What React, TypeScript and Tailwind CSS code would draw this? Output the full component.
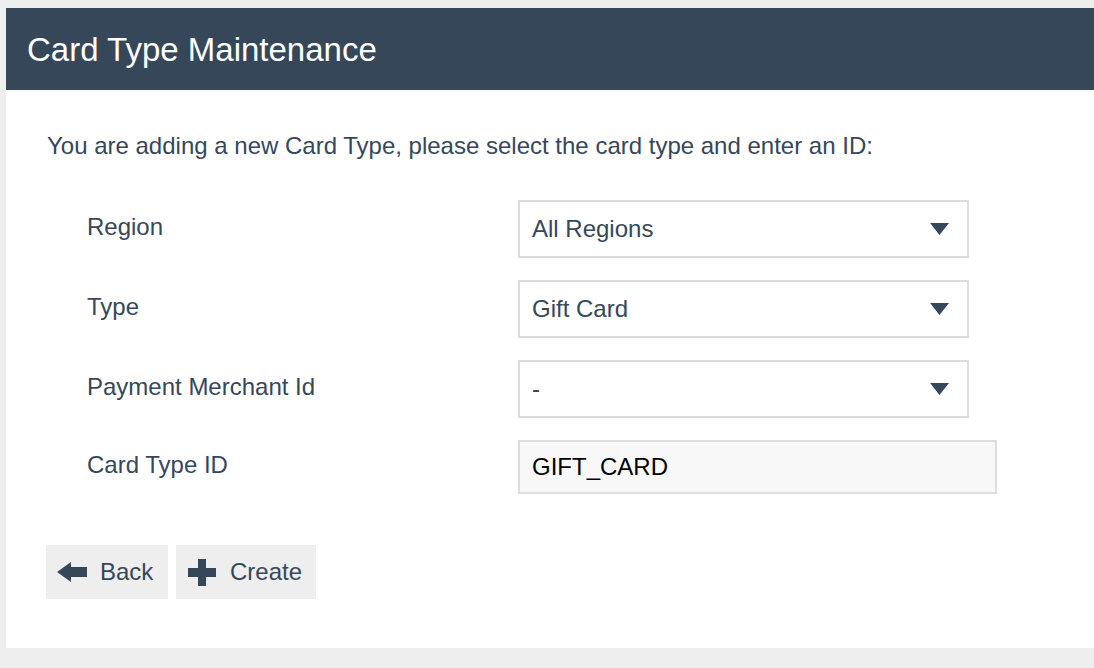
import React from "react";

const Caret = () => (
  <svg width="19" height="12" viewBox="0 0 19 12" className="shrink-0">
    <polygon points="0,0 19,0 9.5,12" fill="#36475a" />
  </svg>
);

const SelectBox = ({ value }: { value: string }) => (
  <div className="w-[451px] h-[58px] border-2 border-[#dddddd] bg-white flex items-center justify-between pl-[12px] pr-[18px]">
    <span className="text-[24px] text-[#36475a]">{value}</span>
    <Caret />
  </div>
);

const Row = ({ label, children, last }: { label: string; children: React.ReactNode; last?: boolean }) => (
  <div className={`flex items-start ${last ? "" : "mb-[22px]"}`}>
    <div className={`w-[471px] shrink-0 pl-[40px] text-[24px] text-[#36475a] leading-[29px] ${last ? "pt-[10px]" : "pt-[12px]"}`}>{label}</div>
    {children}
  </div>
);

export default function App() {
  return (
    <div
      className="w-[1094px] h-[668px] bg-[#eeeeee] pt-[8px] pl-[6px] overflow-hidden"
      style={{ fontFamily: '"Liberation Sans", Arial, Helvetica, sans-serif' }}
    >
      <div className="bg-white">
        <div className="h-[82px] bg-[#36475a] flex items-center pl-[21px]">
          <h1 className="text-[33px] text-white leading-none">Card Type Maintenance</h1>
        </div>
        <div className="pl-[41px] pt-[41px] pb-[49px]">
          <p className="text-[24px] leading-[29px] text-[#36475a]">
            You are adding a new Card Type, please select the card type and enter an ID:
          </p>
          <div className="mt-[40px]">
            <Row label="Region">
              <SelectBox value="All Regions" />
            </Row>
            <Row label="Type">
              <SelectBox value="Gift Card" />
            </Row>
            <Row label="Payment Merchant Id">
              <SelectBox value="-" />
            </Row>
            <Row label="Card Type ID" last>
              <div className="w-[479px] h-[54px] border-2 border-[#dddddd] bg-[#f8f8f8] flex items-center pl-[12px]">
                <span className="text-[24px] text-black">GIFT_CARD</span>
              </div>
            </Row>
          </div>
          <div className="flex gap-[8px] mt-[51px] -ml-[1px]">
            <button className="h-[54px] w-[122px] bg-[#eeeeee] flex items-center pl-[11px] gap-[13px] text-[24px] text-[#36475a]">
              <svg width="30" height="20" viewBox="0 0 30 20">
                <polygon points="0,10 14,0 14,5 30,5 30,15 14,15 14,20" fill="#36475a" />
              </svg>
              <span>Back</span>
            </button>
            <button className="h-[54px] w-[140px] bg-[#eeeeee] flex items-center pl-[12px] gap-[14px] text-[24px] text-[#36475a]">
              <svg width="28" height="27" viewBox="0 0 28 27">
                <rect x="10" y="0" width="8" height="27" fill="#36475a" />
                <rect x="0" y="9" width="28" height="9" fill="#36475a" />
              </svg>
              <span>Create</span>
            </button>
          </div>
        </div>
      </div>
    </div>
  );
}
